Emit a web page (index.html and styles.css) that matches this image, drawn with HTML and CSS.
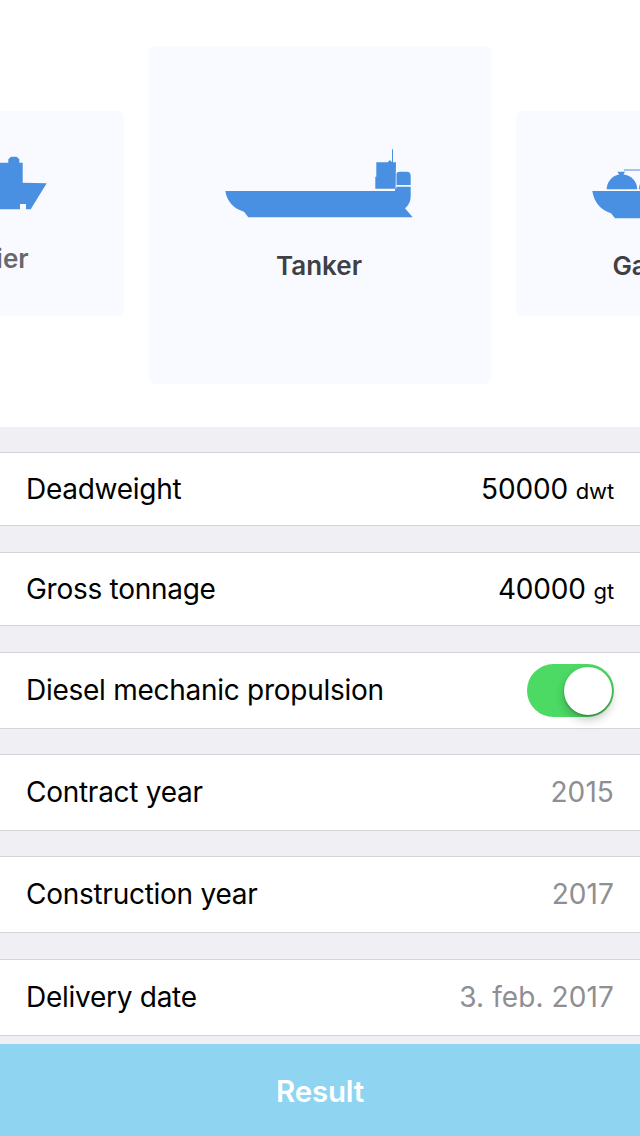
FILE: index.html
```html
<!DOCTYPE html>
<html lang="en">
<head>
<meta charset="utf-8">
<title>Ship calculator</title>
<link rel="stylesheet" href="styles.css">
</head>
<body>
<div class="screen">
  <section class="carousel">
    <div class="card card-prev">
      <svg class="ship" viewBox="0 0 200 75" aria-hidden="true">
        <path d="M5 46H140V25.700H155.300V22.300L158 19.700H163.700L166.300 22.300V25.700H169.700V45.700L193.700 46.300L177.700 72.300H173V67H167V72.300H40L30 62Z"/>
      </svg>
      <div class="card-label">Bulk carrier</div>
    </div>
    <div class="card card-active">
      <svg class="ship" viewBox="0 0 200 75" aria-hidden="true">
        <path d="M5.300 46H175V43.700H155.300V31.700H156.300V17.300H167.700L170 15L172 17.300V4.300H173V17.300H176L175.600 43.700H176.300V41.700H190.700V51.700Q190.500 59 185 63.300L192.700 72.300H28.300L24 66.700Q8 62 5.300 46Z"/>
        <path d="M176.500 40V29Q176.500 26.700 180 26.700H186.700Q190.700 26.700 190.700 31V40Z"/>
      </svg>
      <div class="card-label">Tanker</div>
    </div>
    <div class="card card-next">
      <svg class="ship" viewBox="0 0 200 75" aria-hidden="true">
        <path d="M5.300 46H190V73.300H28L24 68.300Q8 63 5.300 46Z"/>
        <path d="M19.700 44.300A15 15 0 0 1 32 29.600L30.500 26.800H38L36.500 29.600A15 15 0 0 1 50.300 44.300Z"/>
        <path d="M52 44.300A15 15 0 0 1 82 44.300Z"/>
        <rect x="37" y="24.500" width="60" height="1"/>
      </svg>
      <div class="card-label">Gas carrier</div>
    </div>
  </section>
  <main class="form">
    <div class="row row-short">
      <span class="row-label">Deadweight</span>
      <span class="row-value">50000 <small class="unit">dwt</small></span>
    </div>
    <div class="row row-short">
      <span class="row-label">Gross tonnage</span>
      <span class="row-value">40000 <small class="unit">gt</small></span>
    </div>
    <div class="row">
      <span class="row-label">Diesel mechanic propulsion</span>
      <span class="switch"><span class="switch-knob"></span></span>
    </div>
    <div class="row">
      <span class="row-label">Contract year</span>
      <span class="row-value muted">2015</span>
    </div>
    <div class="row row-spaced">
      <span class="row-label">Construction year</span>
      <span class="row-value muted">2017</span>
    </div>
    <div class="row">
      <span class="row-label">Delivery date</span>
      <span class="row-value muted">3. feb. 2017</span>
    </div>
  </main>
  <button class="result" type="button">Result</button>
</div>
</body>
</html>
```
FILE: styles.css
```css
* { box-sizing: border-box; }
html, body { margin: 0; padding: 0; }
body { font-family: Inter, "Liberation Sans", sans-serif; background: #efeff4; color: #000; }
.screen { width: 640px; height: 1136px; display: flex; flex-direction: column; overflow: hidden; }

.carousel {
  flex: 0 0 427px;
  background: #fff;
  display: flex;
  justify-content: center;
  gap: 25px;
  overflow: hidden;
  padding-top: 46px;
}
.card {
  flex: 0 0 342px;
  background: #f9faff;
  border-radius: 6px;
  display: flex;
  flex-direction: column;
  align-items: center;
}
.card-active { height: 338px; padding-top: 99px; }
.card-prev { height: 205px; margin-top: 65px; padding-top: 26px; }
.card-next { height: 205px; margin-top: 65px; padding-top: 34px; }
.ship { width: 200px; height: 75px; display: block; fill: #4a90e2; }
.card-label { font-size: 26px; line-height: 32px; font-weight: 600; color: #3e4045; margin-top: 30px; margin-left: -2px; white-space: nowrap; word-spacing: 8px; }
.card-prev .card-label { color: #66686c; margin-top: 31px; }

.form { flex: 1; padding-top: 25px; display: flex; flex-direction: column; gap: 25px; }
.row {
  height: 77px;
  background: #fff;
  border-top: 1px solid #d4d4d8;
  border-bottom: 1px solid #d4d4d8;
  padding: 0 26px 1px;
  display: flex;
  align-items: center;
  justify-content: space-between;
  font-size: 28px;
  letter-spacing: -0.27px;
  white-space: nowrap;
}
.row-short { height: 74px; margin-bottom: 1px; padding-bottom: 0; }
.row-spaced { margin-bottom: 1px; }
.row-value { color: #000; letter-spacing: -0.15px; }
.unit { font-size: 22px; }
.muted { color: #8e8e93; letter-spacing: 0.1px; }

.switch {
  position: relative;
  width: 87px;
  height: 53px;
  border-radius: 27px;
  background: #4cd964;
}
.switch-knob {
  position: absolute;
  top: 3px;
  right: 2px;
  width: 48px;
  height: 48px;
  border-radius: 50%;
  background: #fff;
  box-shadow: 0 5px 10px rgba(0, 0, 0, 0.22), 0 1px 2px rgba(0, 0, 0, 0.3);
}

.result {
  flex: 0 0 92px;
  border: 0;
  padding: 2px 0 0;
  background: #8fd4f0;
  color: #fff;
  font-family: inherit;
  font-size: 29.500px;
  font-weight: 600;
  letter-spacing: -0.2px;
}
```
